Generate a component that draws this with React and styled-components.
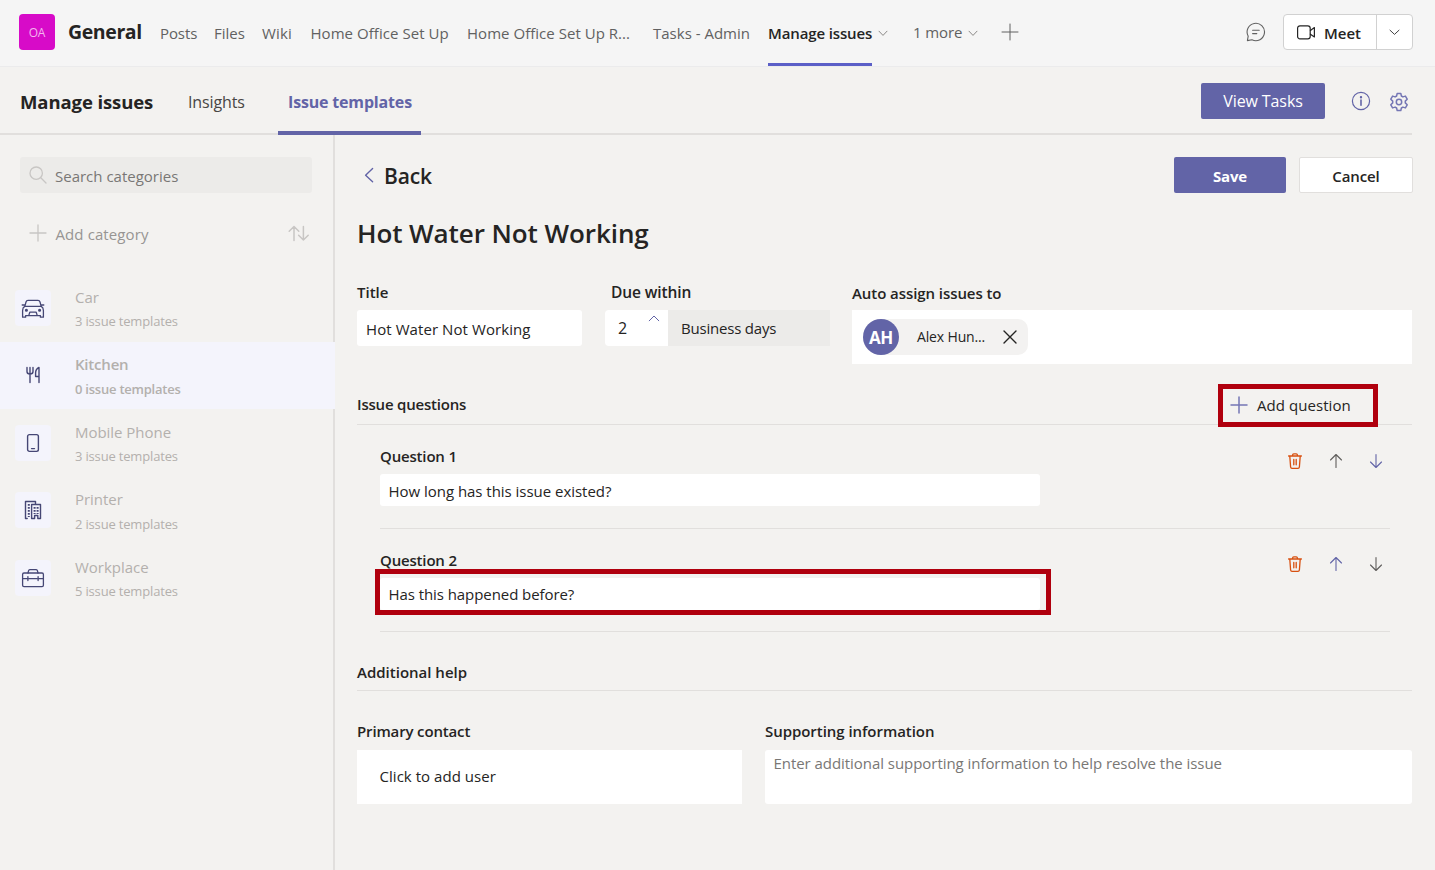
import React from "react";
import styled, { createGlobalStyle } from "styled-components";

const Global = createGlobalStyle`
  * { box-sizing: border-box; }
  body { margin: 0; background: #f3f2f0; overflow: hidden; font-family: "Open Sans", "Noto Sans", sans-serif; color: #252423; }
  svg { display: block; flex: none; }
`;

const Text = styled.div`
  font-size: ${(p) => p.$size || 15}px;
  font-weight: ${(p) => p.$weight || 400};
  letter-spacing: ${(p) => p.$ls || 0}px;
  line-height: 20px;
  height: 20px;
  white-space: nowrap;
  color: ${(p) => p.$color || "inherit"};
`;

/* ---------- channel header ---------- */
const ChannelBar = styled.header`
  display: flex;
  height: 67px;
  background: #f5f5f5;
  border-bottom: 1px solid #ebebec;
  padding: 14px 22px 0 19px;
`;
const TeamAvatar = styled.div`
  width: 36px;
  height: 36px;
  border-radius: 4px;
  background: #d70bc8;
  color: #f3b5ee;
  font-size: 12px;
  letter-spacing: -0.3px;
  line-height: 37px;
  text-align: center;
  margin-right: 13px;
`;
const ChannelName = styled(Text)`
  width: 92px;
  margin-top: 8px;
`;
const ChannelTab = styled.div`
  width: ${(p) => p.$w}px;
  padding-top: ${(p) => p.$pt || 9}px;
  height: 52px;
  color: ${(p) => (p.$active ? "#242424" : "#616161")};
  border-bottom: 3px solid ${(p) => (p.$active ? "#5b5fc7" : "transparent")};
`;
const IconSlot = styled.div`
  width: ${(p) => p.$w}px;
  padding-top: ${(p) => p.$pt || 0}px;
  padding-left: ${(p) => p.$pl || 0}px;
`;
const ChatSlot = styled(IconSlot)`
  margin-left: auto;
`;
const MeetGroup = styled.div`
  display: flex;
  width: 130px;
  height: 36px;
  margin-left: 15px;
  background: #fff;
  border: 1px solid #d1d1d1;
  border-radius: 4px;
`;
const MeetMain = styled.div`
  display: flex;
  width: 93px;
  padding: 8px 0 0 12px;
  gap: 8px;
  border-right: 1px solid #d1d1d1;
`;
const MeetMore = styled.div`
  display: flex;
  flex: 1;
  align-items: center;
  justify-content: center;
`;

/* ---------- app header ---------- */
const AppBar = styled.div`
  display: flex;
  height: 68px;
  width: 1412px;
  border-bottom: 2px solid #e1dfdd;
  padding-left: 20px;
`;
const AppTitle = styled(Text)`
  width: 168px;
  margin-top: 25px;
`;
const AppTab = styled.div`
  width: ${(p) => p.$w}px;
  padding: 25px 0 0 ${(p) => p.$pl || 0}px;
  height: 68px;
  border-bottom: 4px solid ${(p) => (p.$active ? "#6264a7" : "transparent")};
`;
const AppActions = styled.div`
  display: flex;
  margin-left: auto;
  padding-top: 16px;
`;
const Button = styled.button`
  width: ${(p) => p.$w}px;
  height: 36px;
  display: flex;
  justify-content: center;
  padding: ${(p) => p.$pt || 8}px 0 0;
  font-family: inherit;
  border-radius: 2px;
  border: ${(p) => (p.$primary ? "0" : "1px solid #e1dfdd")};
  background: ${(p) => (p.$primary ? "#6264a7" : "#fff")};
  color: ${(p) => (p.$primary ? "#fff" : "#252423")};
`;

/* ---------- body ---------- */
const Body = styled.div`
  display: flex;
  height: 735px;
`;
const Sidebar = styled.aside`
  width: 335px;
  border-right: 2px solid #e1dfdd;
  padding-top: 22px;
`;
const SearchBox = styled.div`
  display: flex;
  width: 292px;
  height: 36px;
  margin-left: 20px;
  padding: 9px 0 0 9px;
  gap: 8px;
  background: #ecebe9;
  border-radius: 3px;
`;
const AddRow = styled.div`
  display: flex;
  height: 81px;
  padding: 31px 0 0 29px;
  gap: 8.5px;
`;
const SortSlot = styled.div`
  margin-left: auto;
  margin-right: 23px;
`;
const Category = styled.div`
  display: flex;
  height: ${(p) => p.$h}px;
  width: 335px;
  background: ${(p) => (p.$active ? "#f4f4fc" : "transparent")};
  padding: ${(p) => p.$pt}px 0 0 15px;
`;
const CategoryIcon = styled.div`
  display: flex;
  align-items: center;
  justify-content: center;
  width: 36px;
  height: 36px;
  border-radius: 4px;
  background: #f4f4fc;
  margin-right: 24px;
`;
const CategoryText = styled.div`
  display: flex;
  flex-direction: column;
  gap: ${(p) => p.$gap}px;
  margin-top: -3px;
  color: #b3b0ad;
`;

const Main = styled.main`
  flex: 1;
  padding: 22px 22px 0 22px;
`;
const TopRow = styled.div`
  display: flex;
  height: 36px;
`;
const BackLink = styled.div`
  display: flex;
  padding: 9px 0 0 7px;
  gap: 10px;
`;
const TopActions = styled.div`
  display: flex;
  gap: 13px;
  margin-left: auto;
`;
const PageTitle = styled(Text)`
  margin-top: 30px;
`;
const FieldRow = styled.div`
  display: flex;
  margin-top: 39px;
  height: 92px;
`;
const Field = styled.div`
  width: ${(p) => p.$w}px;
  padding-top: ${(p) => p.$pt || 0}px;
  margin-right: ${(p) => p.$mr || 0}px;
`;
const FieldLabel = styled(Text)`
  padding-left: ${(p) => p.$pl || 0}px;
  margin-bottom: ${(p) => p.$mb}px;
`;
const Input = styled.div`
  width: ${(p) => p.$w}px;
  height: ${(p) => p.$h || 36}px;
  padding: ${(p) => p.$pad};
  background: #fff;
  border-radius: 3px;
`;
const DueGroup = styled.div`
  display: flex;
  height: 36px;
`;
const DueCount = styled.div`
  display: flex;
  width: 63px;
  background: #fff;
  border-radius: 4px 0 0 4px;
  padding: 8px 0 0 13px;
`;
const DueUnit = styled.div`
  width: 162px;
  background: #ecebe9;
  padding: 8px 0 0 13px;
`;
const StepUp = styled.div`
  margin: -3px 8px 0 auto;
`;
const Picker = styled.div`
  height: 54px;
  background: #fff;
  padding: ${(p) => p.$pad};
`;
const PersonPill = styled.div`
  display: flex;
  width: 165px;
  height: 36px;
  background: #f3f2f1;
  border-radius: 18px 10px 10px 18px;
`;
const PersonAvatar = styled.div`
  width: 36px;
  height: 36px;
  border-radius: 50%;
  background: #6264a7;
  color: #fff;
  display: flex;
  justify-content: center;
  padding-top: 9px;
`;
const PersonName = styled(Text)`
  width: 86px;
  padding-left: 18px;
  margin-top: 8px;
`;
const SectionHead = styled.div`
  display: flex;
  justify-content: space-between;
  width: 1055px;
  height: ${(p) => p.$h}px;
  border-bottom: 1px solid #e1dfdd;
  padding-top: ${(p) => p.$pt}px;
`;
const AddQuestion = styled.div`
  display: flex;
  align-items: flex-start;
  gap: 9px;
  width: 160px;
  height: 43px;
  margin: -10px 34px 0 0;
  padding: 6px 0 0 7px;
  border: 5px solid #b0000e;
  background: #f3f2f0;
`;
const AddQuestionIcon = styled.div`
  padding-top: 1px;
`;
const Question = styled.div`
  display: flex;
  width: 1010px;
  margin-left: 23px;
  height: ${(p) => p.$h}px;
  padding-top: 21px;
  border-bottom: 1px solid #e1dfdd;
`;
const QuestionField = styled.div`
  position: relative;
  width: 660px;
`;
const Highlight = styled.div`
  position: absolute;
  left: -5px;
  right: -11px;
  top: 19px;
  height: 46px;
  border: 5px solid #b0000e;
`;
const QuestionTools = styled.div`
  display: flex;
  gap: 20px;
  margin: ${(p) => p.$mt}px 4px 0 auto;
`;
const HelpRow = styled.div`
  display: flex;
  gap: 23px;
  margin-top: 30px;
`;

/* ---------- icons ---------- */
const Svg = ({ w, h, c, s = 1, children }) => (
  <svg width={w} height={h} viewBox={`0 0 ${w} ${h}`} fill="none" stroke={c} strokeWidth={s} strokeLinecap="round" strokeLinejoin="round">
    {children}
  </svg>
);
const ChevronDown = ({ c = "#8a8886", w = 10 }) => (
  <Svg w={w} h={7} c={c}><path d={`M1 1.2 L${w / 2} 5.4 L${w - 1} 1.2`} /></Svg>
);
const Plus = ({ c, s = 1 }) => (
  <Svg w={18} h={18} c={c} s={s}><path d="M9 1V17M1 9H17" /></Svg>
);
const ArrowIcon = ({ down, c }) => (
  <Svg w={20} h={20} c={c} s={1.1}>
    <path d={down ? "M10 3.5V16.5M4.5 11L10 16.5L15.5 11" : "M10 16.5V3.5M4.5 9L10 3.5L15.5 9"} />
  </Svg>
);
const TrashIcon = () => (
  <Svg w={21} h={20} c="#d8500f" s={1.3}>
    <path d="M3.6 5H16.4M7.6 4.8V4Q7.6 2.8 8.8 2.8H11.2Q12.4 2.8 12.4 4V4.8M4.8 5.4L5.6 16Q5.8 17.3 7 17.3H13Q14.2 17.3 14.4 16L15.2 5.4M8.8 8.4V13.8M11.2 8.4V13.8" />
  </Svg>
);
const navy = "#464775";
const icons = {
  car: (
    <Svg w={24} h={20} c={navy} s={1.3}>
      <path d="M1.6 12.4Q1.6 9.6 3.8 8.4H20.2Q22.4 9.6 22.4 12.4V19.2H19.4V17.6H4.6V19.2H1.6ZM3.8 8.4L5 4Q5.5 2.4 7 2.4H17Q18.5 2.4 19 4L20.2 8.4M1.2 7H3.4M22.8 7H20.6M7.8 17.4L8.8 14.2H15.2L16.2 17.4" />
      <circle cx="5.4" cy="12.2" r=".9" fill={navy} /><circle cx="18.6" cy="12.2" r=".9" fill={navy} />
    </Svg>
  ),
  kitchen: (
    <Svg w={16} h={18} c={navy} s={1.4}>
      <path d="M2 1.5V5.5Q2 8 5 8Q8 8 8 5.5V1.5M5 1.5V16.5M14 1.5V16.5M14 1.5Q10.6 3 10.6 7V10.5H14" />
    </Svg>
  ),
  phone: (
    <Svg w={14} h={20} c={navy} s={1.4}>
      <rect x="1.6" y="1.6" width="10.8" height="16.8" rx="1.8" /><path d="M5.5 15.6H8.5" />
    </Svg>
  ),
  printer: (
    <Svg w={18} h={20} c={navy} s={1.4}>
      <path d="M1.5 18.5V1.5H11.5V4M1.5 18.5H3.2M7.6 18.5V4.5H16.5V18.5H13.8V15.5H10.6V18.5Z" />
      <path strokeDasharray="1.7 1.3" strokeLinecap="butt" strokeWidth="2" d="M4.8 4V17M10.6 7V14M13.6 7V14" />
    </Svg>
  ),
  work: (
    <Svg w={24} h={20} c={navy} s={1.3}>
      <rect x="1.6" y="5" width="20.8" height="13.6" rx="1.4" />
      <path d="M7 5L7.6 2.6Q7.8 1.6 8.8 1.6H15.2Q16.2 1.6 16.4 2.6L17 5M1.6 10.6H6M8 10.6H16M18 10.6H22.4M6.9 8.6V12.6M17.1 8.6V12.6" />
    </Svg>
  ),
};

const categories = [
  { name: "Car", n: 3, icon: "car", h: 68, pt: 16, gap: 4 },
  { name: "Kitchen", n: 0, icon: "kitchen", h: 67, pt: 15, active: true, gap: 5 },
  { name: "Mobile Phone", n: 3, icon: "phone", h: 68, pt: 16, gap: 4 },
  { name: "Printer", n: 2, icon: "printer", h: 67, pt: 15, gap: 5 },
  { name: "Workplace", n: 5, icon: "work", h: 68, pt: 16, gap: 4 },
];

const tabs = [
  { t: "Posts", w: 54, ls: -0.1 },
  { t: "Files", w: 48 },
  { t: "Wiki", w: 48.5, ls: 0.15 },
  { t: "Home Office Set Up", w: 156.5, ls: 0.05 },
  { t: "Home Office Set Up R...", w: 186, ls: 0.03 },
  { t: "Tasks - Admin", w: 115 },
];

const questions = [
  { q: "How long has this issue existed?", h: 104, pt: 7, mt: 5, up: "#605e5c", down: "#6264a7", ls: -0.03 },
  { q: "Has this happened before?", h: 103, pt: 6, mt: 4, up: "#6264a7", down: "#605e5c", marked: true, ls: -0.07 },
];

export default function App() {
  return (
    <>
      <Global />
      <ChannelBar>
        <TeamAvatar>OA</TeamAvatar>
        <ChannelName $size={19.5} $weight={700} $ls={-0.4}>General</ChannelName>
        {tabs.map((t) => (
          <ChannelTab key={t.t} $w={t.w}><Text $ls={t.ls}>{t.t}</Text></ChannelTab>
        ))}
        <ChannelTab $w={104} $active><Text $weight={600} $ls={-0.13}>Manage issues</Text></ChannelTab>
        <IconSlot $w={41} $pt={16} $pl={6}><ChevronDown /></IconSlot>
        <ChannelTab $w={54} $pt={8}><Text $ls={-0.1}>1 more</Text></ChannelTab>
        <IconSlot $w={34} $pt={16} $pl={1}><ChevronDown /></IconSlot>
        <IconSlot $w={20} $pt={9}><Plus c="#616161" /></IconSlot>
        <ChatSlot $w={22} $pt={8}>
          <Svg w={20} h={20} c="#616161" s={1.1}>
            <path d="M1.4 18.6L2.2 14.2A8.7 8.7 0 1 1 6 17.8ZM6.6 8.2H13.2M6.6 11.6H10.8" />
          </Svg>
        </ChatSlot>
        <MeetGroup>
          <MeetMain>
            <Svg w={20} h={20} c="#242424" s={1.2}>
              <rect x="1.6" y="2.8" width="12.6" height="13" rx="2.4" /><path d="M14.4 7.4L18.4 4.6V14L14.4 11.2" />
            </Svg>
            <Text $weight={600}>Meet</Text>
          </MeetMain>
          <MeetMore><ChevronDown c="#424242" w={11} /></MeetMore>
        </MeetGroup>
      </ChannelBar>

      <AppBar>
        <AppTitle $size={18.5} $weight={700} $ls={-0.1}>Manage issues</AppTitle>
        <AppTab $w={90}><Text $size={16} $color="#484644" $ls={-0.12}>Insights</Text></AppTab>
        <AppTab $w={143} $pl={10} $active><Text $size={16} $weight={700} $ls={-0.17} $color="#6264a7">Issue templates</Text></AppTab>
        <AppActions>
          <Button $w={124} $primary><Text $size={16} $ls={-0.1}>View Tasks</Text></Button>
          <IconSlot $w={39} $pt={8} $pl={26}>
            <Svg w={20} h={20} c="#6264a7" s={1.2}>
              <circle cx="10" cy="10" r="8.6" /><path d="M10 9V14.2" strokeWidth="1.6" /><circle cx="10" cy="6.2" r=".6" fill="#6264a7" />
            </Svg>
          </IconSlot>
          <IconSlot $w={48} $pt={8.5} $pl={25}>
            <Svg w={20} h={20} c="#7476b4" s={1.5}>
              <path d="M8.2 1.4H11.8L12.4 4L13.9 4.9L16.4 4.1L18.2 7.2L16.3 9.1V10.9L18.2 12.8L16.4 15.9L13.9 15.1L12.4 16L11.8 18.6H8.2L7.6 16L6.1 15.1L3.6 15.9L1.8 12.8L3.7 10.9V9.1L1.8 7.2L3.6 4.1L6.1 4.9L7.6 4Z" />
              <circle cx="10" cy="10" r="2.7" />
            </Svg>
          </IconSlot>
        </AppActions>
      </AppBar>

      <Body>
        <Sidebar>
          <SearchBox>
            <Svg w={18} h={18} c="#c8c6c4" s={1.3}><circle cx="7.2" cy="7.2" r="6.2" /><path d="M11.8 11.8L17 17" /></Svg>
            <Text $color="#797775">Search categories</Text>
          </SearchBox>
          <AddRow>
            <Plus c="#c8c6c4" s={1.3} />
            <Text $color="#979593" $ls={0.1}>Add category</Text>
            <SortSlot>
              <Svg w={22} h={18} c="#c8c6c4" s={1.5}><path d="M6 16.5V2.5M1.2 7.2L6 2.5L10.8 7.2M15.4 2.5V16M10.6 11.3L15.4 16L20.2 11.3" /></Svg>
            </SortSlot>
          </AddRow>
          {categories.map((c) => (
            <Category key={c.name} $h={c.h} $pt={c.pt} $active={c.active}>
              <CategoryIcon>{icons[c.icon]}</CategoryIcon>
              <CategoryText $gap={c.gap}>
                <Text $weight={c.active ? 600 : 400} $ls={c.active ? -0.2 : -0.03}>{c.name}</Text>
                <Text $size={13} $weight={c.active ? 600 : 400} $ls={c.active ? -0.23 : -0.17}>{c.n} issue templates</Text>
              </CategoryText>
            </Category>
          ))}
        </Sidebar>

        <Main>
          <TopRow>
            <BackLink>
              <Svg w={10} h={18} c="#6264a7" s={1.4}><path d="M8.6 2.6L1.6 9.2L8.6 15.8" /></Svg>
              <Text $size={21} $weight={600} $ls={-0.15}>Back</Text>
            </BackLink>
            <TopActions>
              <Button $w={112} $pt={9} $primary><Text $weight={700} $ls={-0.2}>Save</Text></Button>
              <Button $w={114}><Text $weight={600} $ls={-0.1}>Cancel</Text></Button>
            </TopActions>
          </TopRow>
          <PageTitle $size={26} $weight={600} $ls={-0.08}>Hot Water Not Working</PageTitle>

          <FieldRow>
            <Field $w={225} $mr={23}>
              <FieldLabel $weight={600} $mb={8}>Title</FieldLabel>
              <Input $w={225} $pad="9px 0 0 9px"><Text $ls={0.08}>Hot Water Not Working</Text></Input>
            </Field>
            <Field $w={225} $mr={22}>
              <FieldLabel $weight={600} $size={15.5} $ls={-0.1} $pl={6} $mb={8}>Due within</FieldLabel>
              <DueGroup>
                <DueCount>
                  <Text $size={16}>2</Text>
                  <StepUp><Svg w={12} h={7} c="#6264a7"><path d="M1.2 5.8L6 1L10.8 5.8" /></Svg></StepUp>
                </DueCount>
                <DueUnit><Text $ls={-0.2}>Business days</Text></DueUnit>
              </DueGroup>
            </Field>
            <Field $w={560} $pt={1}>
              <FieldLabel $weight={600} $ls={-0.07} $mb={7}>Auto assign issues to</FieldLabel>
              <Picker $pad="9px 0 0 11px">
                <PersonPill>
                  <PersonAvatar><Text $size={17} $weight={700} $ls={-0.3}>AH</Text></PersonAvatar>
                  <PersonName $size={14} $ls={-0.15}>Alex Hun...</PersonName>
                  <IconSlot $w={43} $pt={10} $pl={17}>
                    <Svg w={16} h={16} c="#252423" s={1.4}><path d="M2 2L14 14M14 2L2 14" /></Svg>
                  </IconSlot>
                </PersonPill>
              </Picker>
            </Field>
          </FieldRow>

          <SectionHead $h={51} $pt={20}>
            <Text $weight={600} $ls={-0.2}>Issue questions</Text>
            <AddQuestion>
              <AddQuestionIcon><Plus c="#7476b4" s={1.5} /></AddQuestionIcon>
              <Text $ls={0.06}>Add question</Text>
            </AddQuestion>
          </SectionHead>

          {questions.map((q, i) => (
            <Question key={q.q} $h={q.h}>
              <QuestionField>
                <FieldLabel $weight={600} $ls={-0.17} $mb={8}>Question {i + 1}</FieldLabel>
                <Input $w={660} $h={32} $pad={`${q.pt}px 0 0 8.5px`}><Text $ls={q.ls}>{q.q}</Text></Input>
                {q.marked && <Highlight />}
              </QuestionField>
              <QuestionTools $mt={q.mt}>
                <TrashIcon />
                <ArrowIcon c={q.up} />
                <ArrowIcon down c={q.down} />
              </QuestionTools>
            </Question>
          ))}

          <SectionHead $h={59} $pt={30}>
            <Text $weight={600}>Additional help</Text>
          </SectionHead>
          <HelpRow>
            <Field $w={385}>
              <FieldLabel $weight={600} $ls={-0.15} $mb={9}>Primary contact</FieldLabel>
              <Picker $pad="16px 0 0 22.5px"><Text $ls={0.04}>Click to add user</Text></Picker>
            </Field>
            <Field $w={647}>
              <FieldLabel $weight={600} $ls={-0.05} $mb={9}>Supporting information</FieldLabel>
              <Input $w={647} $h={54} $pad="3px 0 0 8.5px"><Text $color="#797775" $ls={-0.05}>Enter additional supporting information to help resolve the issue</Text></Input>
            </Field>
          </HelpRow>
        </Main>
      </Body>
    </>
  );
}
